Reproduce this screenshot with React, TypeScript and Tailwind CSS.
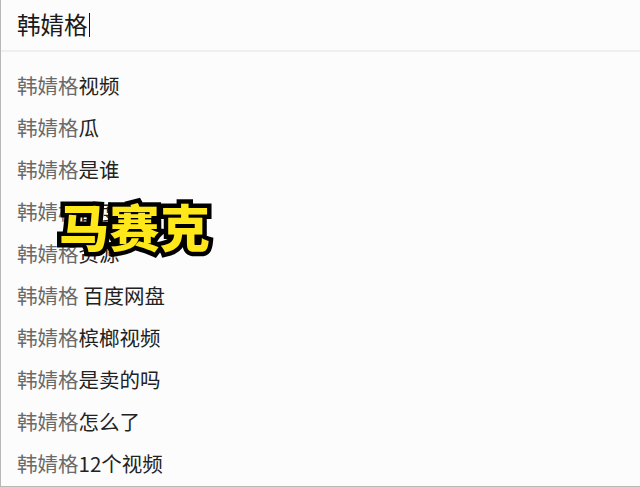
import React from 'react';

const suggestions = [
  { base: '韩婧格', rest: '视频' },
  { base: '韩婧格', rest: '瓜' },
  { base: '韩婧格', rest: '是谁' },
  { base: '韩婧格', rest: '百度云' },
  { base: '韩婧格', rest: '资源' },
  { base: '韩婧格', rest: ' 百度网盘' },
  { base: '韩婧格', rest: '槟榔视频' },
  { base: '韩婧格', rest: '是卖的吗' },
  { base: '韩婧格', rest: '怎么了' },
  { base: '韩婧格', rest: '12个视频' },
];

const font = "font-['Microsoft_YaHei','Noto_Sans_CJK_SC',sans-serif]";

export default function App() {
  return (
    <div className={`relative w-[640px] h-[487px] overflow-hidden bg-[#fcfcfc] ${font}`}>
      <div className="h-[487px] border-l border-b border-[#b8b8b8]">
        <div className="h-[52px] flex items-center pl-4 border-b-2 border-[#efefef]">
          <span className="text-[23.5px] leading-none text-[#1a1a1a]">韩婧格</span>
          <span className="ml-[1px] w-[1.5px] h-[24px] bg-[#111]" />
        </div>
        <ul className="pt-[12px]">
          {suggestions.map((s, i) => (
            <li key={i} className="h-[42px] flex items-center pl-4 text-[20.5px] leading-none whitespace-pre">
              <span className="text-[#6a6a6a]">{s.base}</span>
              <span className="text-[#222]">{s.rest}</span>
            </li>
          ))}
        </ul>
      </div>

      {/* mosaic sticker over the 4th row */}
      <div className="absolute left-[59px] top-[200px] text-[50px] leading-none font-black text-[#ffe81a] tracking-[0.5px] [-webkit-text-stroke:9px_#000] [paint-order:stroke_fill] font-['Noto_Sans_CJK_SC',sans-serif]">
        马赛克
      </div>
    </div>
  );
}
